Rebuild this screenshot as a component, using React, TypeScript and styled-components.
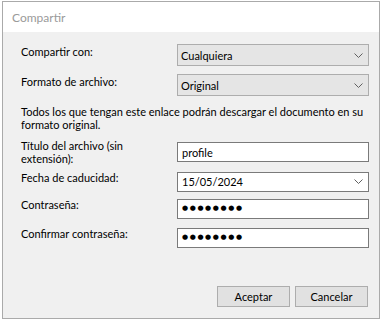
import React from "react";
import styled, { createGlobalStyle } from "styled-components";

const Global = createGlobalStyle`
  html, body { margin: 0; padding: 0; background: #ffffff; }
  body { font-family: Lato, "Noto Sans", "Liberation Sans", sans-serif; font-size: 11px; color: #000; }
  * { box-sizing: border-box; }
`;

const Window = styled.div`
  margin: 1px 0 0 2px;
  width: 378px;
  height: 318px;
  border: 1px solid #aaaaaa;
  display: flex;
  flex-direction: column;
  background: #f0f0f0;
`;

const TitleBar = styled.div`
  height: 30px;
  background: #ffffff;
  color: #9a9a9a;
  font-size: 12px;
  display: flex;
  align-items: center;
  padding-left: 9px;
`;

const Body = styled.div`
  flex: 1;
  display: flex;
  flex-direction: column;
  padding: 12px 10px 11px 18px;
`;

const Row = styled.div<{ $mt: number; $h: number }>`
  display: grid;
  grid-template-columns: 156px 1fr;
  align-items: center;
  margin-top: ${(p) => p.$mt}px;
  min-height: ${(p) => p.$h}px;
`;

const Label = styled.div<{ $lift?: number }>`
  line-height: 13px;
  padding-right: 8px;
  margin-bottom: ${(p) => (p.$lift ?? 8)}px;
`;

const Description = styled.div<{ $mt: number }>`
  margin-top: ${(p) => p.$mt}px;
  line-height: 13px;
`;

const Combo = styled.div`
  height: 22px;
  border: 1px solid #adadad;
  background: #e5e5e5;
  display: flex;
  align-items: center;
  justify-content: space-between;
  padding: 0 5px 0 3px;
`;

const Field = styled.div`
  height: 20px;
  border: 1px solid #7a7a7a;
  background: #ffffff;
  display: flex;
  align-items: center;
  justify-content: space-between;
  padding: 0 5px 0 4px;
`;

const Dots = styled.span`
  font-family: "DejaVu Sans", sans-serif;
  font-size: 7px;
  letter-spacing: 1.6px;
  line-height: 1;
`;

const Footer = styled.div`
  margin-top: auto;
  display: flex;
  justify-content: flex-end;
  gap: 5px;
  padding-right: 1px;
`;

const Button = styled.button`
  width: 73px;
  height: 21px;
  border: 1px solid #adadad;
  background: #e1e1e1;
  font-family: inherit;
  font-size: 11px;
  color: #000;
  padding: 0;
`;

const Chevron = () => (
  <svg width="9" height="5" viewBox="0 0 9 5">
    <path d="M0.5 0.5 L4.5 4.5 L8.5 0.5" fill="none" stroke="#606060" strokeWidth="1" />
  </svg>
);

export default function App() {
  return (
    <>
      <Global />
      <Window>
        <TitleBar>Compartir</TitleBar>
        <Body>
          <Row $mt={0} $h={22}>
            <Label>Compartir con:</Label>
            <Combo>
              <span>Cualquiera</span>
              <Chevron />
            </Combo>
          </Row>
          <Row $mt={8} $h={22}>
            <Label>Formato de archivo:</Label>
            <Combo>
              <span>Original</span>
              <Chevron />
            </Combo>
          </Row>
          <Description $mt={9}>
            Todos los que tengan este enlace podrán descargar el documento en su formato original.
          </Description>
          <Row $mt={8} $h={26}>
            <Label $lift={0}>Título del archivo (sin extensión):</Label>
            <Field>profile</Field>
          </Row>
          <Row $mt={6} $h={20}>
            <Label>Fecha de caducidad:</Label>
            <Field>
              <span>15/05/2024</span>
              <Chevron />
            </Field>
          </Row>
          <Row $mt={6} $h={20}>
            <Label>Contraseña:</Label>
            <Field>
              <Dots>●●●●●●●●</Dots>
            </Field>
          </Row>
          <Row $mt={8} $h={20}>
            <Label>Confirmar contraseña:</Label>
            <Field>
              <Dots>●●●●●●●●</Dots>
            </Field>
          </Row>
          <Footer>
            <Button>Aceptar</Button>
            <Button>Cancelar</Button>
          </Footer>
        </Body>
      </Window>
    </>
  );
}
